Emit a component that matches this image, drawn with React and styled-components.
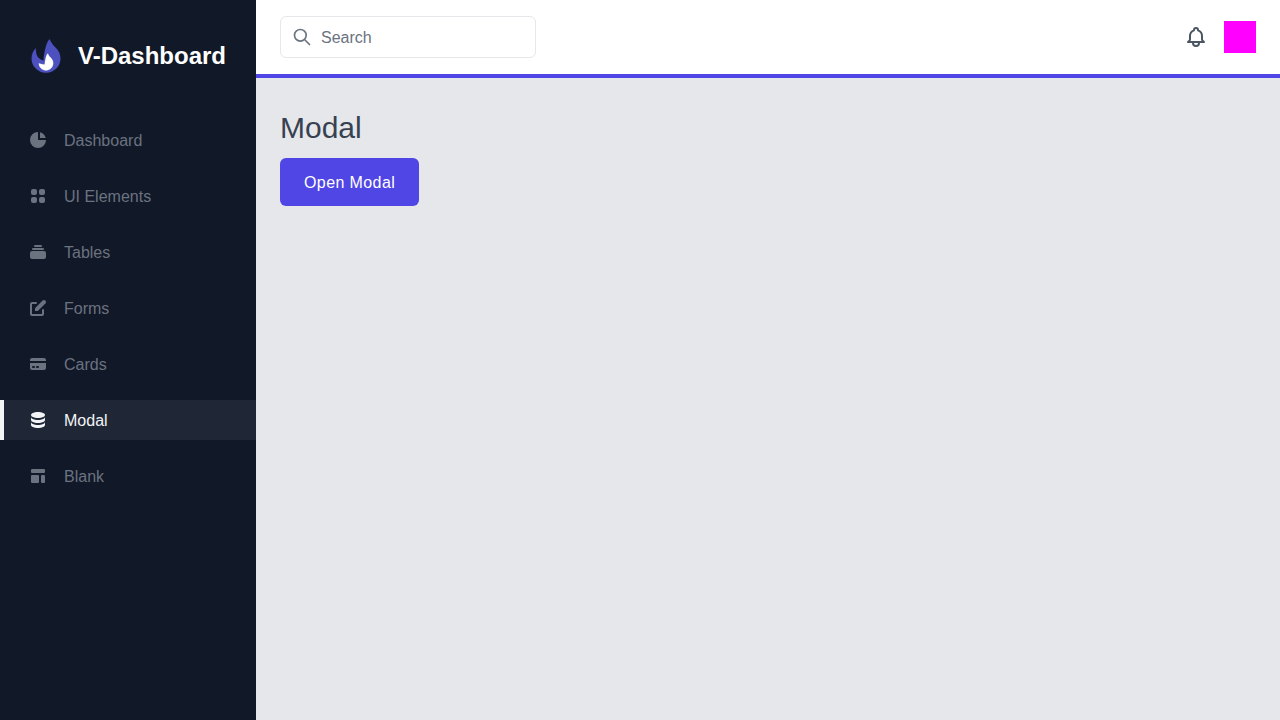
import React from "react";
import styled, { createGlobalStyle } from "styled-components";

const GlobalStyle = createGlobalStyle`
  *, *::before, *::after { box-sizing: border-box; }
  body {
    margin: 0;
    font-family: "Liberation Sans", Arial, sans-serif;
    font-size: 16px;
    line-height: 24px;
    background: #e5e7eb;
  }
`;

const Layout = styled.div`
  display: flex;
  min-height: 100vh;
`;

const Sidebar = styled.aside`
  flex: 0 0 256px;
  background: #111827;
`;

const Brand = styled.div`
  display: flex;
  align-items: center;
  justify-content: center;
  gap: 8px;
  padding-right: 8px;
  margin-top: 32px;
  color: #ffffff;
  font-size: 24px;
  line-height: 32px;
  font-weight: 600;
`;

const Nav = styled.nav`
  display: flex;
  flex-direction: column;
  gap: 16px;
  margin-top: 40px;
`;

const NavLink = styled.a`
  display: flex;
  align-items: center;
  gap: 16px;
  padding: 8px 24px;
  border-left: 4px solid ${(p) => (p.$active ? "#f3f4f6" : "#111827")};
  background: ${(p) => (p.$active ? "#1f2736" : "transparent")};
  color: ${(p) => (p.$active ? "#f3f4f6" : "#6b7280")};
  text-decoration: none;
`;

const NavLabel = styled.span`
  padding-top: 2px;
  line-height: 22px;
`;

const Content = styled.div`
  flex: 1;
  min-width: 0;
  display: flex;
  flex-direction: column;
`;

const Header = styled.header`
  display: flex;
  align-items: center;
  justify-content: space-between;
  padding: 16px 24px;
  background: #ffffff;
  border-bottom: 4px solid #4f46e5;
`;

const SearchBox = styled.label`
  display: flex;
  align-items: center;
  gap: 9px;
  width: 256px;
  padding: 8px 11px;
  border: 1px solid #e5e7eb;
  border-radius: 6px;
  color: #6b7280;
`;

const SearchInput = styled.input`
  flex: 1;
  min-width: 0;
  height: 24px;
  padding: 2px 0 0;
  border: 0;
  outline: 0;
  background: transparent;
  color: #374151;
  font: inherit;
  line-height: 22px;

  &::placeholder { color: #6b7280; opacity: 1; }
`;

const Actions = styled.div`
  display: flex;
  align-items: center;
  gap: 16px;
`;

const IconButton = styled.button`
  display: flex;
  padding: 0;
  border: 0;
  background: transparent;
  color: #4b5563;
  cursor: pointer;
`;

const Avatar = styled.button`
  width: 32px;
  height: 32px;
  padding: 0;
  border: 0;
  background: #ff00ff;
  cursor: pointer;
`;

const Main = styled.main`
  padding: 32px 24px;
`;

const Title = styled.h1`
  margin: 0;
  color: #374151;
  font-size: 30px;
  line-height: 36px;
  font-weight: 400;
`;

const PrimaryButton = styled.button`
  margin-top: 12px;
  padding: 14px 24px 12px;
  border: 0;
  border-radius: 6px;
  background: #4f46e5;
  color: #ffffff;
  font: inherit;
  line-height: 22px;
  letter-spacing: 0.025em;
  cursor: pointer;
`;

const SolidIcon = ({ paths }) => (
  <svg width="20" height="20" viewBox="0 0 20 20" fill="currentColor" aria-hidden="true">
    {paths.map((d) => (
      <path key={d} d={d} fillRule="evenodd" clipRule="evenodd" />
    ))}
  </svg>
);

const OutlineIcon = ({ size, d }) => (
  <svg width={size} height={size} viewBox="0 0 24 24" fill="none" stroke="currentColor" strokeWidth="2" strokeLinecap="round" strokeLinejoin="round" aria-hidden="true">
    <path d={d} />
  </svg>
);

const Flame = () => (
  <svg width="48" height="48" viewBox="0 0 512 512" aria-hidden="true">
    <path
      fill="#4C51BF"
      stroke="#4C51BF"
      strokeWidth="2"
      d="M364.61 390.213C304.625 450.196 207.37 450.196 147.386 390.213C117.394 360.22 102.398 320.911 102.398 281.6C102.398 242.291 117.394 202.981 147.386 172.989C147.386 230.4 153.6 281.6 230.4 307.2C230.4 256 256 102.4 294.4 76.8C320 128 334.618 142.997 364.608 172.989C394.601 202.981 409.597 242.291 409.597 281.6C409.597 320.911 394.601 360.22 364.61 390.213Z"
    />
    <path
      fill="#ffffff"
      stroke="#ffffff"
      strokeWidth="2"
      d="M201.694 387.105C231.686 417.098 280.312 417.098 310.305 387.105C325.301 372.109 332.8 352.456 332.8 332.8C332.8 313.144 325.301 293.491 310.305 278.495C295.309 263.498 288 256 275.2 230.4C256 243.2 243.201 320 243.201 345.6C201.694 345.6 179.2 332.8 179.2 332.8C179.2 352.456 186.698 372.109 201.694 387.105Z"
    />
  </svg>
);

const SEARCH = "M21 21L15 15M17 10C17 13.866 13.866 17 10 17C6.134 17 3 13.866 3 10C3 6.134 6.134 3 10 3C13.866 3 17 6.134 17 10Z";
const BELL = "M15 17H20L18.595 15.595C18.214 15.214 18 14.697 18 14.158V11C18 8.388 16.33 6.165 14 5.341V5C14 3.895 13.105 3 12 3C10.895 3 10 3.895 10 5V5.341C7.67 6.165 6 8.388 6 11V14.158C6 14.697 5.786 15.214 5.405 15.595L4 17H9M15 17V18C15 19.657 13.657 21 12 21C10.343 21 9 19.657 9 18V17M15 17H9";

const links = [
  {
    label: "Dashboard",
    paths: [
      "M2 10a8 8 0 018-8v8h8a8 8 0 11-16 0z",
      "M12 2.252A8.014 8.014 0 0117.748 8H12V2.252z",
    ],
  },
  {
    label: "UI Elements",
    paths: [
      "M5 3a2 2 0 00-2 2v2a2 2 0 002 2h2a2 2 0 002-2V5a2 2 0 00-2-2H5zM5 11a2 2 0 00-2 2v2a2 2 0 002 2h2a2 2 0 002-2v-2a2 2 0 00-2-2H5zM11 5a2 2 0 012-2h2a2 2 0 012 2v2a2 2 0 01-2 2h-2a2 2 0 01-2-2V5zM11 13a2 2 0 012-2h2a2 2 0 012 2v2a2 2 0 01-2 2h-2a2 2 0 01-2-2v-2z",
    ],
  },
  {
    label: "Tables",
    paths: [
      "M7 3a1 1 0 000 2h6a1 1 0 100-2H7zM4 7a1 1 0 011-1h10a1 1 0 110 2H5a1 1 0 01-1-1zM2 11a2 2 0 012-2h12a2 2 0 012 2v4a2 2 0 01-2 2H4a2 2 0 01-2-2v-4z",
    ],
  },
  {
    label: "Forms",
    paths: [
      "M17.414 2.586a2 2 0 00-2.828 0L7 10.172V13h2.828l7.586-7.586a2 2 0 000-2.828z",
      "M2 6a2 2 0 012-2h4a1 1 0 010 2H4v10h10v-4a1 1 0 112 0v4a2 2 0 01-2 2H4a2 2 0 01-2-2V6z",
    ],
  },
  {
    label: "Cards",
    paths: [
      "M4 4a2 2 0 00-2 2v1h16V6a2 2 0 00-2-2H4z",
      "M18 9H2v5a2 2 0 002 2h12a2 2 0 002-2V9zM4 13a1 1 0 011-1h1a1 1 0 110 2H5a1 1 0 01-1-1zm5-1a1 1 0 100 2h1a1 1 0 100-2H9z",
    ],
  },
  {
    label: "Modal",
    active: true,
    paths: [
      "M3 12v3c0 1.657 3.134 3 7 3s7-1.343 7-3v-3c0 1.657-3.134 3-7 3s-7-1.343-7-3z",
      "M3 7v3c0 1.657 3.134 3 7 3s7-1.343 7-3V7c0 1.657-3.134 3-7 3S3 8.657 3 7z",
      "M17 5c0 1.657-3.134 3-7 3S3 6.657 3 5s3.134-3 7-3 7 1.343 7 3z",
    ],
  },
  {
    label: "Blank",
    paths: [
      "M3 4a1 1 0 011-1h12a1 1 0 011 1v2a1 1 0 01-1 1H4a1 1 0 01-1-1V4zM3 10a1 1 0 011-1h6a1 1 0 011 1v6a1 1 0 01-1 1H4a1 1 0 01-1-1v-6zM14 9a1 1 0 00-1 1v6a1 1 0 001 1h2a1 1 0 001-1v-6a1 1 0 00-1-1h-2z",
    ],
  },
];

export default function App() {
  return (
    <>
      <GlobalStyle />
      <Layout>
        <Sidebar>
          <Brand>
            <Flame />
            <span>V-Dashboard</span>
          </Brand>
          <Nav aria-label="Main">
            {links.map(({ label, paths, active }) => (
              <NavLink key={label} href="#" $active={active} aria-current={active ? "page" : undefined}>
                <SolidIcon paths={paths} />
                <NavLabel>{label}</NavLabel>
              </NavLink>
            ))}
          </Nav>
        </Sidebar>
        <Content>
          <Header>
            <SearchBox>
              <OutlineIcon size={20} d={SEARCH} />
              <SearchInput type="text" placeholder="Search" aria-label="Search" />
            </SearchBox>
            <Actions>
              <IconButton type="button" aria-label="Notifications">
                <OutlineIcon size={24} d={BELL} />
              </IconButton>
              <Avatar type="button" aria-label="Account" />
            </Actions>
          </Header>
          <Main>
            <Title>Modal</Title>
            <PrimaryButton type="button">Open Modal</PrimaryButton>
          </Main>
        </Content>
      </Layout>
    </>
  );
}
